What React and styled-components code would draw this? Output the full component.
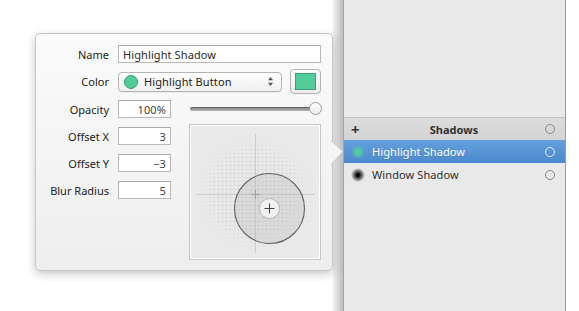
import React from 'react';
import styled, { createGlobalStyle } from 'styled-components';

const GlobalStyle = createGlobalStyle`
  html, body {
    margin: 0;
    padding: 0;
    background: #fff;
  }
  body {
    font-family: "Noto Sans", "DejaVu Sans", sans-serif;
    font-size: 11px;
    color: #222;
  }
`;

const Screen = styled.div`
  display: flex;
  width: 579px;
  height: 311px;
  overflow: hidden;
`;

const Stage = styled.div`
  flex: none;
  width: 343px;
  box-sizing: border-box;
  padding: 33px 0 0 35px;
  background: linear-gradient(to right, #fff 0, #fff 332px, #ededed 334px, #bcbcbc 343px);
`;

const Popover = styled.div`
  position: relative;
  width: 298px;
  box-sizing: border-box;
  padding: 11px 11px 10px 0;
  border: 1px solid #c6c6c6;
  border-radius: 5px;
  background: linear-gradient(#fbfbfb, #eeeeee);
  box-shadow: 0 3px 10px rgba(0, 0, 0, 0.22);
  display: flex;
  flex-direction: column;
  gap: 6px;
`;

const Arrow = styled.svg`
  position: absolute;
  right: -12px;
  top: 106px;
`;

const Row = styled.div`
  display: flex;
  align-items: center;
  height: ${p => p.h}px;
  gap: ${p => p.gap ?? 9}px;
`;

const Label = styled.label`
  flex: none;
  width: 73px;
  margin-right: ${p => p.$mr ?? 0}px;
  text-align: right;
  color: #222;
`;

const Field = styled.div`
  box-sizing: border-box;
  height: 18px;
  width: ${p => (p.w ? `${p.w}px` : 'auto')};
  flex: ${p => (p.w ? 'none' : '1')};
  padding: 0 4px;
  background: #fff;
  border: 1px solid #b9b9b9;
  border-top-color: #a9a9a9;
  display: flex;
  align-items: center;
  justify-content: ${p => (p.num ? 'flex-end' : 'flex-start')};
  color: ${p => (p.num ? '#444' : '#2a2a2a')};
  letter-spacing: 0.1px;
`;

const PopUp = styled.div`
  box-sizing: border-box;
  width: 164px;
  height: 20px;
  padding: 0 7px 0 5px;
  border: 1px solid #b4b4b4;
  border-radius: 4px;
  background: linear-gradient(#ffffff, #f0f0f0);
  box-shadow: 0 1px 0 rgba(0, 0, 0, 0.05);
  display: flex;
  align-items: center;
  gap: 6px;
  letter-spacing: 0.1px;
  color: #222;
`;

const ColorDot = styled.span`
  flex: none;
  width: 12px;
  height: 12px;
  border-radius: 50%;
  background: #52cc98;
  border: 1px solid #3d9c72;
`;

const PopText = styled.span`
  flex: 1;
`;

const SwatchButton = styled.div`
  box-sizing: border-box;
  width: 31px;
  height: 25px;
  padding: 3px 4px;
  border: 1px solid #b2b2b2;
  border-radius: 4px;
  background: linear-gradient(#ffffff, #ededed);
  display: flex;
`;

const Swatch = styled.div`
  flex: 1;
  background: #52cc9b;
  border: 1px solid #3e9e74;
`;

const Lower = styled.div`
  display: flex;
  gap: 18px;
  height: 160px;
`;

const FieldColumn = styled.div`
  width: 135px;
  display: flex;
  flex-direction: column;
  gap: 9px;
`;

const VisualColumn = styled.div`
  width: 132px;
  display: flex;
  flex-direction: column;
  gap: 6px;
`;

const Slider = styled.div`
  position: relative;
  height: 18px;
  display: flex;
  align-items: center;
  padding: 0 4px 0 1px;
`;

const Track = styled.div`
  flex: 1;
  height: 4px;
  border-radius: 3px;
  background: linear-gradient(#7e7e7e, #b4b4b4);
  box-shadow: inset 0 1px 0 rgba(0, 0, 0, 0.25);
`;

const Knob = styled.div`
  position: absolute;
  right: -1px;
  top: 2px;
  width: 13px;
  height: 13px;
  box-sizing: border-box;
  border-radius: 50%;
  border: 1px solid #9a9a9a;
  background: linear-gradient(#ffffff, #ececec);
`;

const Preview = styled.div`
  box-sizing: border-box;
  height: 136px;
  border: 1px solid #c6c6c6;
  box-shadow: inset 0 0 0 1px #fff;
  background: #eaeaea;
  display: flex;
`;

const Sidebar = styled.div`
  flex: none;
  width: 223px;
  box-sizing: border-box;
  border-left: 1px solid #a5a5a5;
  border-right: 1px solid #9e9e9e;
  background: #e9e9e9;
  padding-top: 117px;
`;

const Header = styled.div`
  height: 23px;
  box-sizing: border-box;
  border-top: 1px solid #c2c2c2;
  background: linear-gradient(#dcdcdc, #d3d3d3);
  display: grid;
  grid-template-columns: 28px 1fr 28px;
  align-items: center;
  padding-right: 1px;
  font-weight: 700;
  color: #333;
`;

const Plus = styled.span`
  margin-left: 7px;
  font-size: 15px;
  line-height: 1;
`;

const Title = styled.span`
  text-align: center;
`;

const ItemRow = styled.div`
  height: 23px;
  display: grid;
  grid-template-columns: 28px 1fr 28px;
  align-items: center;
  padding-right: 1px;
  letter-spacing: 0.1px;
  color: ${p => (p.selected ? '#fff' : '#2e2e2e')};
  background: ${p => (p.selected ? 'linear-gradient(#64a0dc, #4c89cf)' : 'transparent')};
  text-shadow: ${p => (p.selected ? '0 1px 0 rgba(0,0,0,0.15)' : 'none')};
`;

const BlurDot = styled.span`
  justify-self: center;
  width: 14px;
  height: 14px;
  border-radius: 50%;
  background: radial-gradient(circle, ${p => p.c} 0, ${p => p.c} 12%, ${p => p.fade} 45%, transparent 72%);
`;

const Toggle = styled.span`
  justify-self: center;
  width: 10px;
  height: 10px;
  box-sizing: border-box;
  border-radius: 50%;
  border: 1px solid ${p => (p.light ? 'rgba(255,255,255,0.85)' : '#8a8a8a')};
`;

const Stepper = () => (
  <svg width="7" height="11" viewBox="0 0 7 11">
    <path d="M3.5 1 L6 4.2 H1 Z" fill="#555" />
    <path d="M3.5 10 L6 6.8 H1 Z" fill="#555" />
  </svg>
);

const ShadowMap = () => {
  const cx = 65;
  const cy = 69;
  return (
    <svg width="130" height="134" viewBox="0 0 130 134">
      <defs>
        <pattern id="grid" width="4" height="4" patternUnits="userSpaceOnUse" x="1" y="1">
          <path d="M3.5 0 V4 M0 3.5 H4" stroke="#dcdcdc" strokeWidth="1" fill="none" />
        </pattern>
        <radialGradient id="fade" cx={cx} cy={cy} r="64" gradientUnits="userSpaceOnUse">
          <stop offset="0" stopColor="#fff" stopOpacity="1" />
          <stop offset="0.55" stopColor="#fff" stopOpacity="0.8" />
          <stop offset="1" stopColor="#fff" stopOpacity="0" />
        </radialGradient>
        <mask id="gridMask">
          <rect width="130" height="134" fill="url(#fade)" />
        </mask>
      </defs>
      <rect width="130" height="134" fill="url(#grid)" mask="url(#gridMask)" />
      <line x1={cx + 0.5} y1="9" x2={cx + 0.5} y2="128" stroke="#cdcdcd" />
      <line x1="6" y1={cy + 0.5} x2="124" y2={cy + 0.5} stroke="#cdcdcd" />
      <circle cx="79.5" cy="83.5" r="35" fill="rgba(180,180,180,0.28)" stroke="#636363" strokeWidth="1.1" />
      <path d={`M${cx - 4} ${cy + 0.5} H${cx + 5} M${cx + 0.5} ${cy - 4} V${cy + 5}`} stroke="#a2a2a2" />
      <circle cx="79.5" cy="83.5" r="10" fill="#f1f1f1" stroke="#b4b4b4" />
      <path d="M74.5 83.5 H84.5 M79.5 78.5 V88.5" stroke="#444" strokeWidth="1" />
    </svg>
  );
};

const numberFields = [
  { label: 'Offset X', value: '3' },
  { label: 'Offset Y', value: '\u22123' },
  { label: 'Blur Radius', value: '5' },
];

const shadows = [
  { name: 'Highlight Shadow', color: '#4fd39a', fade: 'rgba(79,211,154,0.5)', selected: true },
  { name: 'Window Shadow', color: '#000', fade: 'rgba(0,0,0,0.45)' },
];

export default function App() {
  return (
    <>
      <GlobalStyle />
      <Screen>
        <Stage>
          <Popover>
            <Arrow width="13" height="26" viewBox="0 0 13 26">
              <path d="M0 0 L12 11.5 L0 25 Z" fill="#f4f4f4" />
              <path d="M0 0 L12 11.5 L0 25" fill="none" stroke="#c2c2c2" />
            </Arrow>

            <Row h={18}>
              <Label>Name</Label>
              <Field>Highlight Shadow</Field>
            </Row>

            <Row h={25} gap={8}>
              <Label $mr={1}>Color</Label>
              <PopUp>
                <ColorDot />
                <PopText>Highlight Button</PopText>
                <Stepper />
              </PopUp>
              <SwatchButton>
                <Swatch />
              </SwatchButton>
            </Row>

            <Lower>
              <FieldColumn>
                <Row h={18}>
                  <Label>Opacity</Label>
                  <Field w={53} num>100%</Field>
                </Row>
                {numberFields.map(f => (
                  <Row h={18} key={f.label}>
                    <Label>{f.label}</Label>
                    <Field w={53} num>{f.value}</Field>
                  </Row>
                ))}
              </FieldColumn>

              <VisualColumn>
                <Slider>
                  <Track />
                  <Knob />
                </Slider>
                <Preview>
                  <ShadowMap />
                </Preview>
              </VisualColumn>
            </Lower>
          </Popover>
        </Stage>

        <Sidebar>
          <Header>
            <Plus>+</Plus>
            <Title>Shadows</Title>
            <Toggle />
          </Header>
          {shadows.map(s => (
            <ItemRow key={s.name} selected={s.selected}>
              <BlurDot c={s.color} fade={s.fade} />
              <span>{s.name}</span>
              <Toggle light={s.selected} />
            </ItemRow>
          ))}
        </Sidebar>
      </Screen>
    </>
  );
}
